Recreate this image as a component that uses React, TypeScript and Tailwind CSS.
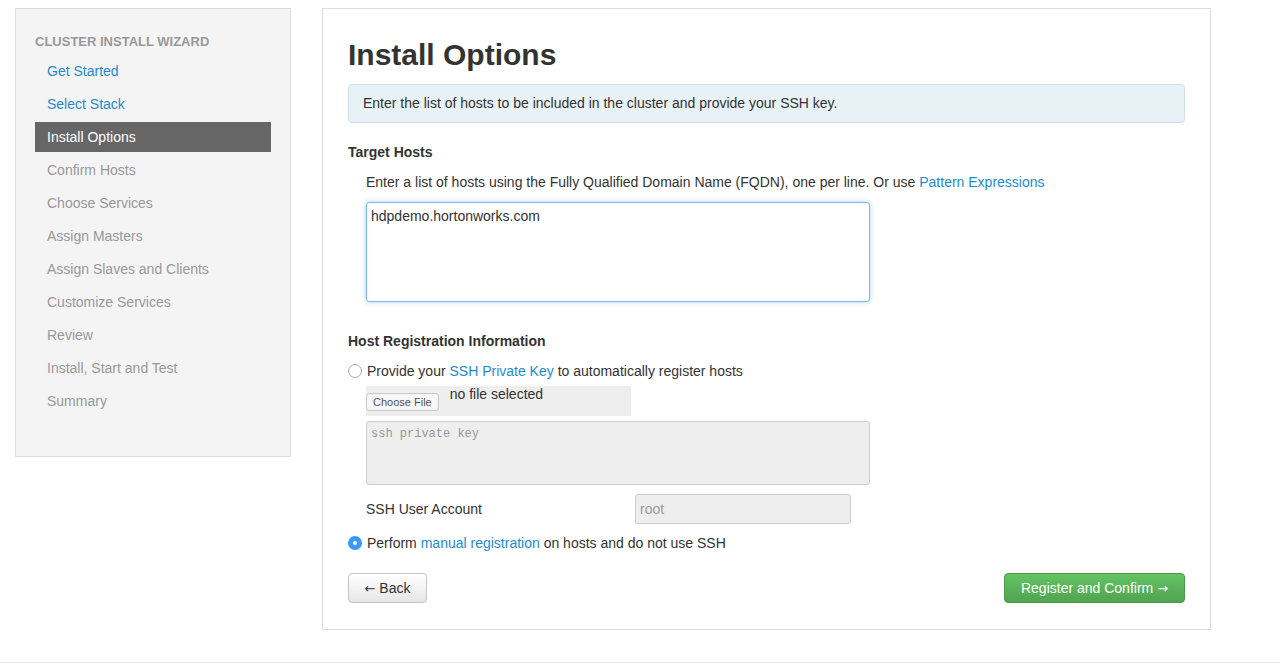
import React from "react";

const steps = [
  { label: "Get Started", state: "done" },
  { label: "Select Stack", state: "done" },
  { label: "Install Options", state: "active" },
  { label: "Confirm Hosts", state: "todo" },
  { label: "Choose Services", state: "todo" },
  { label: "Assign Masters", state: "todo" },
  { label: "Assign Slaves and Clients", state: "todo" },
  { label: "Customize Services", state: "todo" },
  { label: "Review", state: "todo" },
  { label: "Install, Start and Test", state: "todo" },
  { label: "Summary", state: "todo" },
];

function Radio({ checked }: { checked?: boolean }) {
  return checked ? (
    <span className="flex h-[14px] w-[14px] items-center justify-center rounded-full bg-[#3b99fc]">
      <span className="h-[4px] w-[4px] rounded-full bg-white" />
    </span>
  ) : (
    <span className="h-[14px] w-[14px] rounded-full border border-[#a9a9a9] bg-white" />
  );
}

export default function App() {
  return (
    <div className="h-[668px] bg-white font-['Liberation_Sans',Arial,sans-serif] text-[14px] text-[#333]">
      <div className="flex h-[663px] items-start gap-[31px] border-b border-[#e5e5e5] pl-[15px] pt-[8px]">
        {/* wizard steps */}
        <div className="h-[449px] w-[276px] border border-[#dddddd] bg-[#f4f4f4] px-[19px] pt-[25px]">
          <div className="mb-[5px] text-[13px] font-bold leading-[16px] text-[#999]">CLUSTER INSTALL WIZARD</div>
          {steps.map((s) => (
            <div
              key={s.label}
              className={
                s.state === "active"
                  ? "h-[30px] bg-[#666] pl-[12px] leading-[30px] text-white"
                  : s.state === "done"
                  ? "h-[33px] pl-[12px] leading-[33px] text-[#1e8bd1]"
                  : "h-[33px] pl-[12px] leading-[33px] text-[#999]"
              }
              style={s.state === "active" ? { margin: "1px 0 2px" } : undefined}
            >
              {s.label}
            </div>
          ))}
        </div>

        {/* main panel */}
        <div className="h-[622px] w-[889px] border border-[#dddddd] bg-white px-[25px] pt-[28px]">
          <h1 className="text-[30px] font-bold leading-[36px] text-[#333]">Install Options</h1>
          <div className="mt-[11px] h-[39px] rounded-[4px] border border-[#d0dfe6] bg-[#e8f2f6] pl-[14px] leading-[37px] text-[#333]">
            Enter the list of hosts to be included in the cluster and provide your SSH key.
          </div>

          <div className="mt-[20px] font-bold leading-[18px]">Target Hosts</div>
          <div className="pl-[18px]">
            <div className="mt-[12px] leading-[18px]">
              Enter a list of hosts using the Fully Qualified Domain Name (FQDN), one per line. Or use{" "}
              <span className="text-[#1e8bd1]">Pattern Expressions</span>
            </div>
            <div className="mt-[11px] h-[100px] w-[504px] rounded-[3px] border border-[#7db9ea] px-[4px] pt-[4px] leading-[18px] shadow-[0_0_5px_rgba(82,168,236,0.5)]">
              hdpdemo.hortonworks.com
            </div>
          </div>

          <div className="mt-[30px] font-bold leading-[18px]">Host Registration Information</div>
          <div className="mt-[12px] flex items-center gap-[5px] leading-[18px]">
            <Radio />
            <span>
              Provide your <span className="text-[#1e8bd1]">SSH Private Key</span> to automatically register hosts
            </span>
          </div>
          <div className="pl-[18px]">
            <div className="mt-[6px] flex h-[30px] w-[265px] items-start gap-[11px] bg-[#eeeeee]">
              <span className="mt-[7px] h-[18px] rounded-[3px] border border-[#c8c8c8] bg-[#f7f7f7] px-[6px] text-[11px] leading-[16px] text-[#555]">
                Choose File
              </span>
              <span className="leading-[16px]">no file selected</span>
            </div>
            <div className="mt-[5px] h-[64px] w-[504px] rounded-[3px] border border-[#cccccc] bg-[#eeeeee] px-[4px] pt-[4px] font-['Liberation_Mono',monospace] text-[12px] leading-[16px] text-[#999]">
              ssh private key
            </div>
            <div className="mt-[9px] flex items-center">
              <span className="w-[269px] leading-[18px]">SSH User Account</span>
              <div className="h-[30px] w-[216px] rounded-[3px] border border-[#cccccc] bg-[#eeeeee] pl-[4px] leading-[28px] text-[#999]">
                root
              </div>
            </div>
          </div>
          <div className="mt-[10px] flex items-center gap-[5px] leading-[18px]">
            <Radio checked />
            <span>
              Perform <span className="text-[#1e8bd1]">manual registration</span> on hosts and do not use SSH
            </span>
          </div>

          <div className="mt-[21px] flex justify-between">
            <button className="h-[30px] w-[79px] rounded-[4px] border border-[#c5c5c5] bg-gradient-to-b from-white to-[#e6e6e6] text-[14px] text-[#333]">
              <span className="font-['DejaVu_Sans',sans-serif] text-[13px]">←</span> Back
            </button>
            <button className="h-[30px] w-[181px] rounded-[4px] border border-[#4a9a4a] bg-gradient-to-b from-[#62c462] to-[#51a351] text-[14px] text-white">
              Register and Confirm <span className="font-['DejaVu_Sans',sans-serif] text-[13px]">→</span>
            </button>
          </div>
        </div>
      </div>
    </div>
  );
}
